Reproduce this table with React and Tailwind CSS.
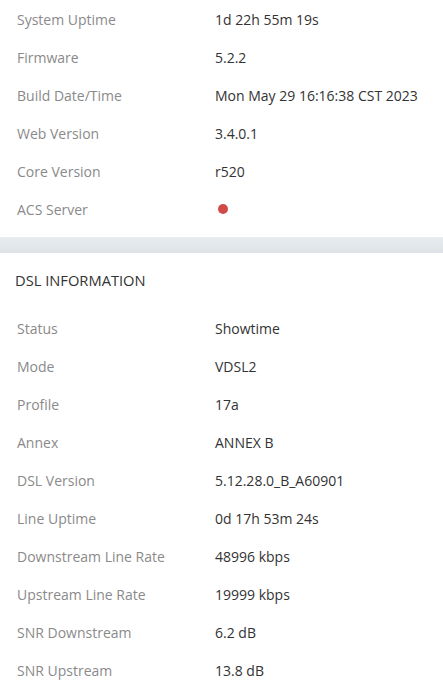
export default function App() {
  const system = [
    ["System Uptime", "1d 22h 55m 19s"],
    ["Firmware", "5.2.2"],
    ["Build Date/Time", "Mon May 29 16:16:38 CST 2023"],
    ["Web Version", "3.4.0.1"],
    ["Core Version", "r520"],
    ["ACS Server", null],
  ];

  const dsl = [
    ["Status", "Showtime"],
    ["Mode", "VDSL2"],
    ["Profile", "17a"],
    ["Annex", "ANNEX B"],
    ["DSL Version", "5.12.28.0_B_A60901"],
    ["Line Uptime", "0d 17h 53m 24s"],
    ["Downstream Line Rate", "48996 kbps"],
    ["Upstream Line Rate", "19999 kbps"],
    ["SNR Downstream", "6.2 dB"],
    ["SNR Upstream", "13.8 dB"],
  ];

  const Row = ({ label, value }) => (
    <div className="flex items-center h-[38px] text-[14px]">
      <div className="w-[215px] pl-[17px] text-[#8a8a8a]">{label}</div>
      <div className="text-[#333]">
        {value === null ? (
          <span className="block w-[10px] h-[10px] ml-[3px] rounded-full bg-[#d04a4a]" />
        ) : (
          value
        )}
      </div>
    </div>
  );

  return (
    <div
      className="w-[443px] h-[692px] overflow-hidden bg-white"
      style={{ fontFamily: '"Open Sans", sans-serif' }}
    >
      {/* System info */}
      <div className="pb-[9px]">
        {system.map(([l, v]) => (
          <Row key={l} label={l} value={v} />
        ))}
      </div>

      <div className="h-[16px] bg-gradient-to-b from-[#e9edf0] to-[#dde2e6]" />

      {/* DSL info */}
      <div className="h-[56px] pb-[2px] flex items-center pl-[15px] text-[14.7px] text-[#333]">
        DSL INFORMATION
      </div>
      <div>
        {dsl.map(([l, v]) => (
          <Row key={l} label={l} value={v} />
        ))}
      </div>
    </div>
  );
}
